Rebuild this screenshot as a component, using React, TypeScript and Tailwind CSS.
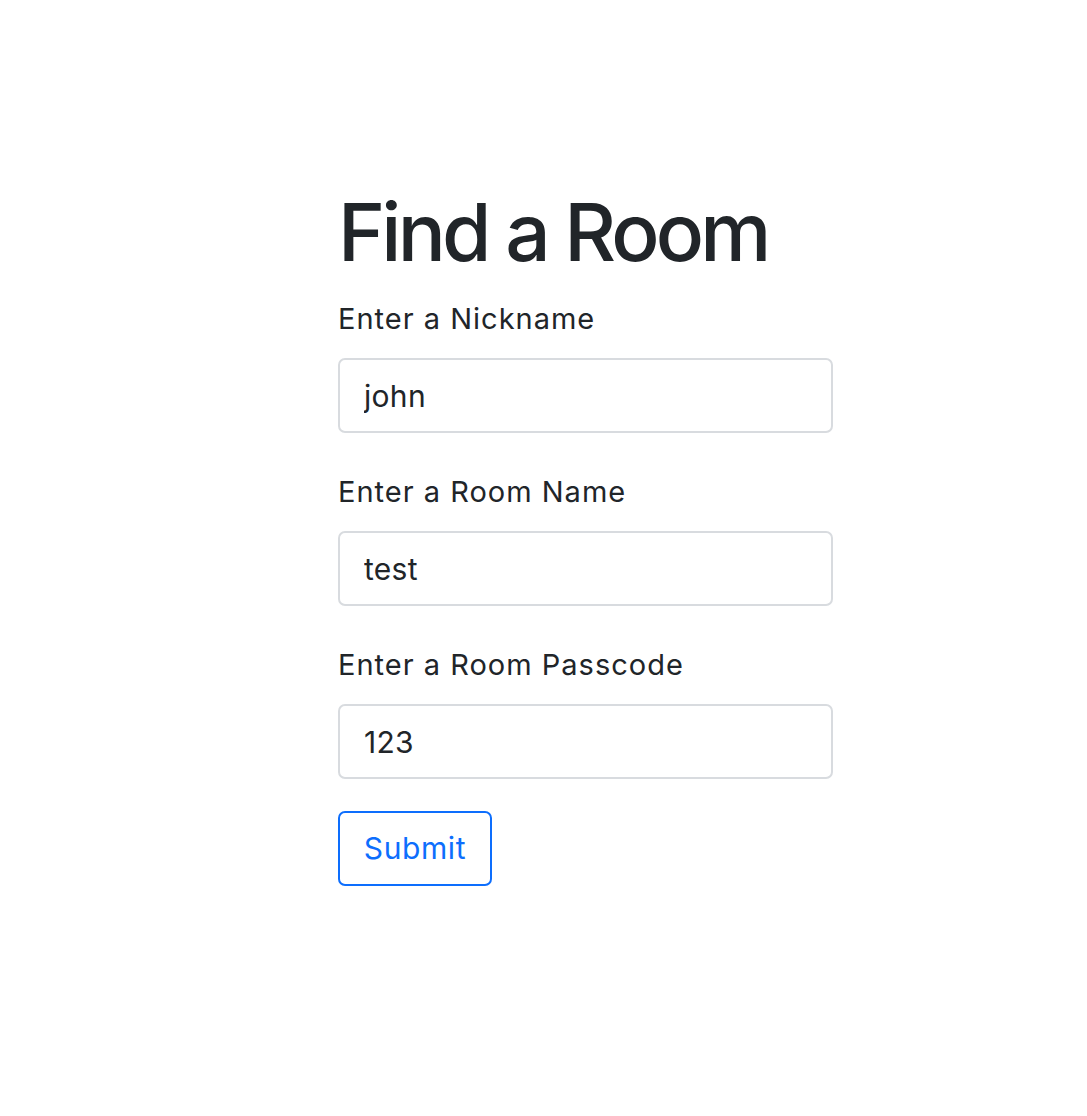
import React, { useState } from 'react';

// Room lookup form
const fields = [
  { id: 'nickname', label: 'Enter a Nickname', value: 'john' },
  { id: 'room', label: 'Enter a Room Name', value: 'test' },
  { id: 'passcode', label: 'Enter a Room Passcode', value: '123' },
];

const App: React.FC = () => {
  const [values, setValues] = useState<Record<string, string>>(
    Object.fromEntries(fields.map((f) => [f.id, f.value]))
  );

  return (
    <div className="min-h-[1116px] bg-white text-[#212529] font-['Inter',sans-serif]">
      <div className="pl-[338px] pt-[184px]">
        <form className="w-[495px]" onSubmit={(e) => e.preventDefault()}>
          <h1 className="text-[80px] leading-[96px] font-medium tracking-[-3.8px] mb-[19px]">Find a Room</h1>
          {fields.map((field) => (
            <div key={field.id} className="mb-[39px]">
              <label htmlFor={field.id} className="block text-[29px] leading-[40px] tracking-[1px] mb-[19px]">
                {field.label}
              </label>
              <input
                id={field.id}
                type="text"
                value={values[field.id]}
                onChange={(e) => setValues({ ...values, [field.id]: e.target.value })}
                className="block w-full h-[75px] px-[24px] text-[30px] tracking-[0.3px] text-[#212529] border-2 border-[#d8dbdf] rounded-[7px] outline-none"
              />
            </div>
          ))}
          <button
            type="submit"
            className="-mt-[7px] h-[75px] w-[154px] text-[30px] tracking-[0.6px] text-[#0d6efd] border-2 border-[#0d6efd] rounded-[7px] bg-white"
          >
            Submit
          </button>
        </form>
      </div>
    </div>
  );
};

export default App;
